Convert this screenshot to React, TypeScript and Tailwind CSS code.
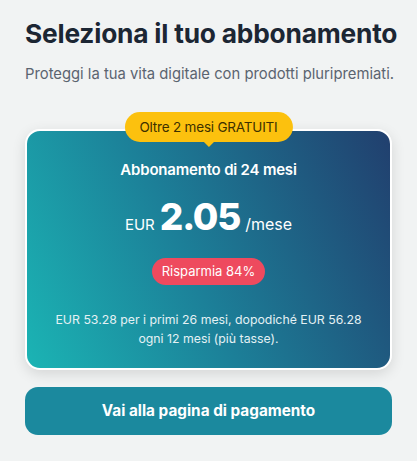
import React from "react";

const App: React.FC = () => {
  return (
    <div className="min-h-screen w-full bg-[#f1f3f3] px-[25px] pt-[17px] font-['Inter',sans-serif]">
      <h1 className="whitespace-nowrap text-[26.3px] font-bold leading-[34px] tracking-[-0.2px] text-[#1c2633]">
        Seleziona il tuo abbonamento
      </h1>
      <p className="mt-[13px] whitespace-nowrap text-[14.8px] leading-[20px] text-[#5b6470]">
        Proteggi la tua vita digitale con prodotti pluripremiati.
      </p>

      <div className="relative mt-[45px]">
        <div className="absolute left-1/2 top-[-17px] z-10 -translate-x-1/2">
          <div className="relative flex h-[30px] items-center whitespace-nowrap rounded-full bg-[#fcc10e] px-[15px] text-[13.5px] tracking-[-0.2px] text-[#3d3000]">
            Oltre 2 mesi GRATUITI
            <span className="absolute bottom-[-5px] left-1/2 h-0 w-0 -translate-x-1/2 border-x-[5px] border-t-[5px] border-x-transparent border-t-[#fcc10e]" />
          </div>
        </div>
        <div className="rounded-[15px] border-2 border-white bg-[linear-gradient(65deg,#1bb4b4_0%,#1c7f98_45%,#213f6e_100%)] shadow-[0_4px_14px_rgba(0,0,0,0.12)]">
          <div className="flex flex-col items-center px-4 pb-[20px] pt-[28px] text-white">
            <div className="text-[15px] font-semibold leading-[22px] tracking-[-0.2px]">Abbonamento di 24 mesi</div>
            <div className="mt-[16px] flex items-baseline gap-[5px]">
              <span className="text-[15px]">EUR</span>
              <span className="text-[37px] font-extrabold leading-[40px] tracking-[-1.2px]">2.05</span>
              <span className="text-[16px]">/mese</span>
            </div>
            <div className="mt-[21px] flex h-[27px] items-center rounded-full bg-[#ee4a5e] px-[10px] text-[13px]">
              Risparmia 84%
            </div>
            <p className="mt-[25px] text-center text-[12.3px] leading-[19px] text-[#e4f1f4]">
              EUR 53.28 per i primi 26 mesi, dopodiché EUR 56.28
              <br />
              ogni 12 mesi (più tasse).
            </p>
          </div>
        </div>
      </div>

      <button className="mt-[17px] flex h-[48px] w-full items-center justify-center rounded-[13px] bg-[#1b899e] text-[15.3px] font-bold text-white">
        Vai alla pagina di pagamento
      </button>
    </div>
  );
};

export default App;
